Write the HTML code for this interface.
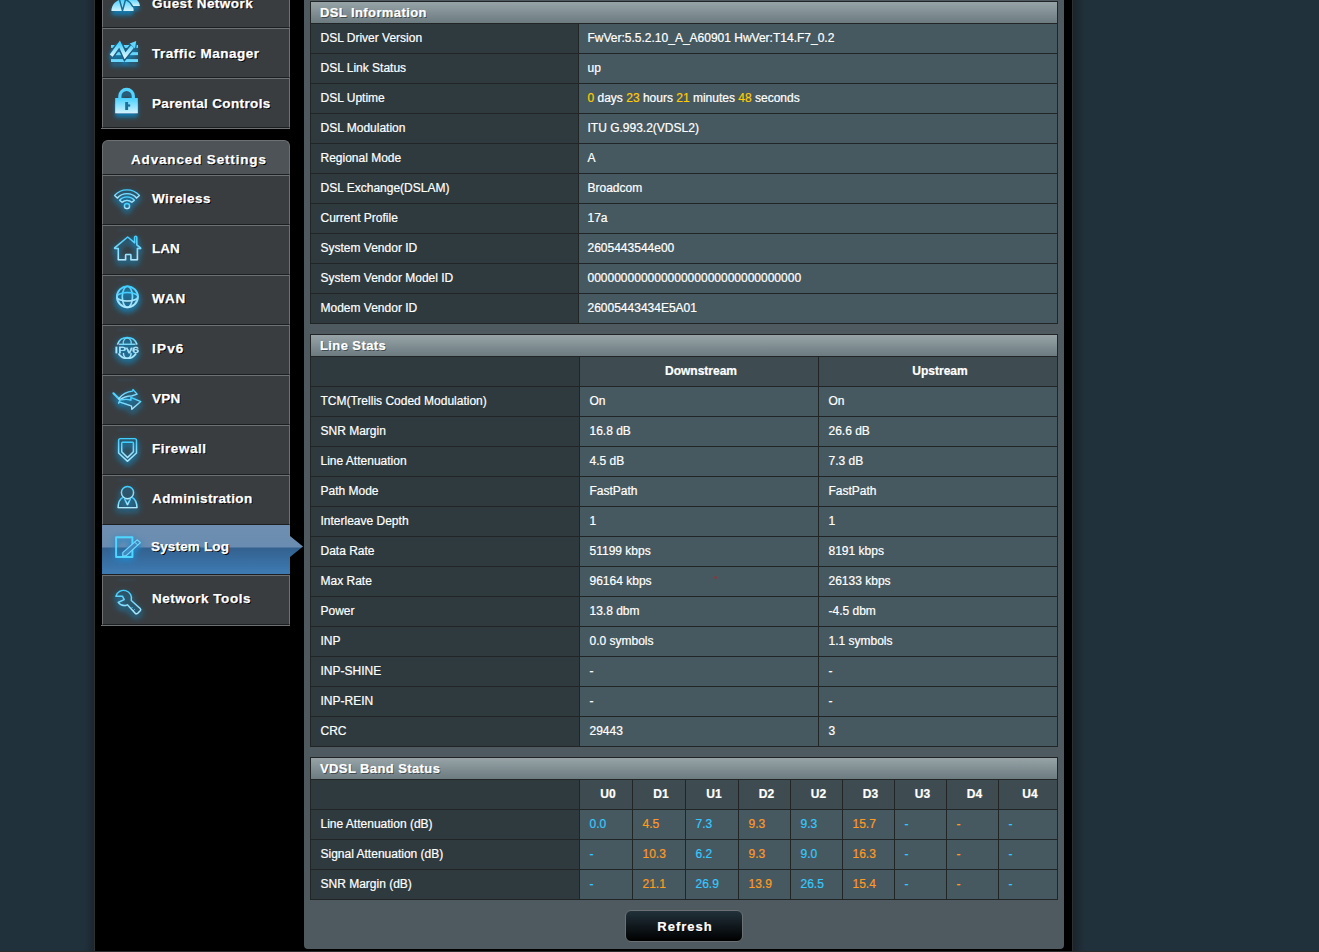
<!DOCTYPE html><html><head><meta charset="utf-8"><style>
html,body{margin:0;padding:0;}
body{width:1319px;height:952px;overflow:hidden;position:relative;background:#21313c;font-family:"Liberation Sans",sans-serif;color:#fff;font-size:12px;}
div{box-sizing:border-box;}
.t{position:absolute;white-space:nowrap;-webkit-text-stroke:0.2px currentColor;}
.mi{position:absolute;left:102px;width:188px;height:50px;background:#393d40;border-top:1px solid #6d7173;border-left:1px solid #6d7173;border-right:1px solid #6d7173;border-bottom:1px solid #1c1f20;}
.ml{position:absolute;left:152px;font-weight:bold;font-size:13.5px;line-height:14px;height:14px;white-space:nowrap;text-shadow:1px 1px 0 #000;-webkit-text-stroke:0.25px #fff;}
</style></head><body>

<div style="position:absolute;left:84px;top:0px;width:10px;height:952px;background:linear-gradient(90deg,#21313c,#1b262e)"></div>
<div style="position:absolute;left:94px;top:0px;width:1px;height:951px;background:#2e3132"></div>
<div style="position:absolute;left:95px;top:0px;width:977px;height:951px;background:#000"></div>
<div style="position:absolute;left:1072px;top:0px;width:1px;height:951px;background:#2e3132"></div>
<div style="position:absolute;left:1073px;top:0px;width:12px;height:952px;background:linear-gradient(90deg,#1a242b,#21313c)"></div>
<div style="position:absolute;left:0px;top:951px;width:1319px;height:1px;background:#2a2d2d"></div>
<div style="position:absolute;left:304px;top:-10px;width:760px;height:959px;background:#4e5a5f;border-radius:0 0 4px 4px"></div>
<div style="position:absolute;left:310px;top:1px;width:748px;height:323px;background:#212526"></div>
<div style="position:absolute;left:311px;top:2px;width:746px;height:21px;background:linear-gradient(#97a3a7,#6c7b80)"></div>
<div class="t" style="left:320px;top:2px;height:21px;line-height:21px;text-align:left;font-weight:bold;font-size:13px;letter-spacing:0.4px;text-shadow:1px 1px 0 rgba(0,0,0,0.45)">DSL Information</div>
<div style="position:absolute;left:311px;top:24px;width:267px;height:29px;background:#2e3a3e"></div>
<div class="t" style="left:320.5px;top:24px;height:29px;line-height:29px;text-align:left;">DSL Driver Version</div>
<div style="position:absolute;left:579px;top:24px;width:478px;height:29px;background:#475960"></div>
<div class="t" style="left:587.5px;top:24px;height:29px;line-height:29px;text-align:left;">FwVer:5.5.2.10_A_A60901 HwVer:T14.F7_0.2</div>
<div style="position:absolute;left:311px;top:54px;width:267px;height:29px;background:#2e3a3e"></div>
<div class="t" style="left:320.5px;top:54px;height:29px;line-height:29px;text-align:left;">DSL Link Status</div>
<div style="position:absolute;left:579px;top:54px;width:478px;height:29px;background:#475960"></div>
<div class="t" style="left:587.5px;top:54px;height:29px;line-height:29px;text-align:left;">up</div>
<div style="position:absolute;left:311px;top:84px;width:267px;height:29px;background:#2e3a3e"></div>
<div class="t" style="left:320.5px;top:84px;height:29px;line-height:29px;text-align:left;">DSL Uptime</div>
<div style="position:absolute;left:579px;top:84px;width:478px;height:29px;background:#475960"></div>
<div class="t" style="left:587.5px;top:84px;height:29px;line-height:29px;text-align:left;"><span style="color:#ffcc00">0</span> days <span style="color:#ffcc00">23</span> hours <span style="color:#ffcc00">21</span> minutes <span style="color:#ffcc00">48</span> seconds</div>
<div style="position:absolute;left:311px;top:114px;width:267px;height:29px;background:#2e3a3e"></div>
<div class="t" style="left:320.5px;top:114px;height:29px;line-height:29px;text-align:left;">DSL Modulation</div>
<div style="position:absolute;left:579px;top:114px;width:478px;height:29px;background:#475960"></div>
<div class="t" style="left:587.5px;top:114px;height:29px;line-height:29px;text-align:left;">ITU G.993.2(VDSL2)</div>
<div style="position:absolute;left:311px;top:144px;width:267px;height:29px;background:#2e3a3e"></div>
<div class="t" style="left:320.5px;top:144px;height:29px;line-height:29px;text-align:left;">Regional Mode</div>
<div style="position:absolute;left:579px;top:144px;width:478px;height:29px;background:#475960"></div>
<div class="t" style="left:587.5px;top:144px;height:29px;line-height:29px;text-align:left;">A</div>
<div style="position:absolute;left:311px;top:174px;width:267px;height:29px;background:#2e3a3e"></div>
<div class="t" style="left:320.5px;top:174px;height:29px;line-height:29px;text-align:left;">DSL Exchange(DSLAM)</div>
<div style="position:absolute;left:579px;top:174px;width:478px;height:29px;background:#475960"></div>
<div class="t" style="left:587.5px;top:174px;height:29px;line-height:29px;text-align:left;">Broadcom</div>
<div style="position:absolute;left:311px;top:204px;width:267px;height:29px;background:#2e3a3e"></div>
<div class="t" style="left:320.5px;top:204px;height:29px;line-height:29px;text-align:left;">Current Profile</div>
<div style="position:absolute;left:579px;top:204px;width:478px;height:29px;background:#475960"></div>
<div class="t" style="left:587.5px;top:204px;height:29px;line-height:29px;text-align:left;">17a</div>
<div style="position:absolute;left:311px;top:234px;width:267px;height:29px;background:#2e3a3e"></div>
<div class="t" style="left:320.5px;top:234px;height:29px;line-height:29px;text-align:left;">System Vendor ID</div>
<div style="position:absolute;left:579px;top:234px;width:478px;height:29px;background:#475960"></div>
<div class="t" style="left:587.5px;top:234px;height:29px;line-height:29px;text-align:left;">2605443544e00</div>
<div style="position:absolute;left:311px;top:264px;width:267px;height:29px;background:#2e3a3e"></div>
<div class="t" style="left:320.5px;top:264px;height:29px;line-height:29px;text-align:left;">System Vendor Model ID</div>
<div style="position:absolute;left:579px;top:264px;width:478px;height:29px;background:#475960"></div>
<div class="t" style="left:587.5px;top:264px;height:29px;line-height:29px;text-align:left;">00000000000000000000000000000000</div>
<div style="position:absolute;left:311px;top:294px;width:267px;height:29px;background:#2e3a3e"></div>
<div class="t" style="left:320.5px;top:294px;height:29px;line-height:29px;text-align:left;">Modem Vendor ID</div>
<div style="position:absolute;left:579px;top:294px;width:478px;height:29px;background:#475960"></div>
<div class="t" style="left:587.5px;top:294px;height:29px;line-height:29px;text-align:left;">26005443434E5A01</div>
<div style="position:absolute;left:310px;top:334px;width:748px;height:413px;background:#212526"></div>
<div style="position:absolute;left:311px;top:335px;width:746px;height:21px;background:linear-gradient(#97a3a7,#6c7b80)"></div>
<div class="t" style="left:320px;top:335px;height:21px;line-height:21px;text-align:left;font-weight:bold;font-size:13px;letter-spacing:0.4px;text-shadow:1px 1px 0 rgba(0,0,0,0.45)">Line Stats</div>
<div style="position:absolute;left:311px;top:357px;width:268px;height:29px;background:#2e3a3e"></div>
<div style="position:absolute;left:580px;top:357px;width:238px;height:29px;background:#3e4c51"></div>
<div class="t" style="left:582px;top:357px;height:29px;line-height:29px;width:238px;text-align:center;font-weight:bold">Downstream</div>
<div style="position:absolute;left:819px;top:357px;width:238px;height:29px;background:#3e4c51"></div>
<div class="t" style="left:821px;top:357px;height:29px;line-height:29px;width:238px;text-align:center;font-weight:bold">Upstream</div>
<div style="position:absolute;left:311px;top:387px;width:268px;height:29px;background:#2e3a3e"></div>
<div class="t" style="left:320.5px;top:387px;height:29px;line-height:29px;text-align:left;">TCM(Trellis Coded Modulation)</div>
<div style="position:absolute;left:580px;top:387px;width:238px;height:29px;background:#475960"></div>
<div class="t" style="left:589.5px;top:387px;height:29px;line-height:29px;text-align:left;">On</div>
<div style="position:absolute;left:819px;top:387px;width:238px;height:29px;background:#475960"></div>
<div class="t" style="left:828.5px;top:387px;height:29px;line-height:29px;text-align:left;">On</div>
<div style="position:absolute;left:311px;top:417px;width:268px;height:29px;background:#2e3a3e"></div>
<div class="t" style="left:320.5px;top:417px;height:29px;line-height:29px;text-align:left;">SNR Margin</div>
<div style="position:absolute;left:580px;top:417px;width:238px;height:29px;background:#475960"></div>
<div class="t" style="left:589.5px;top:417px;height:29px;line-height:29px;text-align:left;">16.8 dB</div>
<div style="position:absolute;left:819px;top:417px;width:238px;height:29px;background:#475960"></div>
<div class="t" style="left:828.5px;top:417px;height:29px;line-height:29px;text-align:left;">26.6 dB</div>
<div style="position:absolute;left:311px;top:447px;width:268px;height:29px;background:#2e3a3e"></div>
<div class="t" style="left:320.5px;top:447px;height:29px;line-height:29px;text-align:left;">Line Attenuation</div>
<div style="position:absolute;left:580px;top:447px;width:238px;height:29px;background:#475960"></div>
<div class="t" style="left:589.5px;top:447px;height:29px;line-height:29px;text-align:left;">4.5 dB</div>
<div style="position:absolute;left:819px;top:447px;width:238px;height:29px;background:#475960"></div>
<div class="t" style="left:828.5px;top:447px;height:29px;line-height:29px;text-align:left;">7.3 dB</div>
<div style="position:absolute;left:311px;top:477px;width:268px;height:29px;background:#2e3a3e"></div>
<div class="t" style="left:320.5px;top:477px;height:29px;line-height:29px;text-align:left;">Path Mode</div>
<div style="position:absolute;left:580px;top:477px;width:238px;height:29px;background:#475960"></div>
<div class="t" style="left:589.5px;top:477px;height:29px;line-height:29px;text-align:left;">FastPath</div>
<div style="position:absolute;left:819px;top:477px;width:238px;height:29px;background:#475960"></div>
<div class="t" style="left:828.5px;top:477px;height:29px;line-height:29px;text-align:left;">FastPath</div>
<div style="position:absolute;left:311px;top:507px;width:268px;height:29px;background:#2e3a3e"></div>
<div class="t" style="left:320.5px;top:507px;height:29px;line-height:29px;text-align:left;">Interleave Depth</div>
<div style="position:absolute;left:580px;top:507px;width:238px;height:29px;background:#475960"></div>
<div class="t" style="left:589.5px;top:507px;height:29px;line-height:29px;text-align:left;">1</div>
<div style="position:absolute;left:819px;top:507px;width:238px;height:29px;background:#475960"></div>
<div class="t" style="left:828.5px;top:507px;height:29px;line-height:29px;text-align:left;">1</div>
<div style="position:absolute;left:311px;top:537px;width:268px;height:29px;background:#2e3a3e"></div>
<div class="t" style="left:320.5px;top:537px;height:29px;line-height:29px;text-align:left;">Data Rate</div>
<div style="position:absolute;left:580px;top:537px;width:238px;height:29px;background:#475960"></div>
<div class="t" style="left:589.5px;top:537px;height:29px;line-height:29px;text-align:left;">51199 kbps</div>
<div style="position:absolute;left:819px;top:537px;width:238px;height:29px;background:#475960"></div>
<div class="t" style="left:828.5px;top:537px;height:29px;line-height:29px;text-align:left;">8191 kbps</div>
<div style="position:absolute;left:311px;top:567px;width:268px;height:29px;background:#2e3a3e"></div>
<div class="t" style="left:320.5px;top:567px;height:29px;line-height:29px;text-align:left;">Max Rate</div>
<div style="position:absolute;left:580px;top:567px;width:238px;height:29px;background:#475960"></div>
<div class="t" style="left:589.5px;top:567px;height:29px;line-height:29px;text-align:left;">96164 kbps</div>
<div style="position:absolute;left:819px;top:567px;width:238px;height:29px;background:#475960"></div>
<div class="t" style="left:828.5px;top:567px;height:29px;line-height:29px;text-align:left;">26133 kbps</div>
<div style="position:absolute;left:311px;top:597px;width:268px;height:29px;background:#2e3a3e"></div>
<div class="t" style="left:320.5px;top:597px;height:29px;line-height:29px;text-align:left;">Power</div>
<div style="position:absolute;left:580px;top:597px;width:238px;height:29px;background:#475960"></div>
<div class="t" style="left:589.5px;top:597px;height:29px;line-height:29px;text-align:left;">13.8 dbm</div>
<div style="position:absolute;left:819px;top:597px;width:238px;height:29px;background:#475960"></div>
<div class="t" style="left:828.5px;top:597px;height:29px;line-height:29px;text-align:left;">-4.5 dbm</div>
<div style="position:absolute;left:311px;top:627px;width:268px;height:29px;background:#2e3a3e"></div>
<div class="t" style="left:320.5px;top:627px;height:29px;line-height:29px;text-align:left;">INP</div>
<div style="position:absolute;left:580px;top:627px;width:238px;height:29px;background:#475960"></div>
<div class="t" style="left:589.5px;top:627px;height:29px;line-height:29px;text-align:left;">0.0 symbols</div>
<div style="position:absolute;left:819px;top:627px;width:238px;height:29px;background:#475960"></div>
<div class="t" style="left:828.5px;top:627px;height:29px;line-height:29px;text-align:left;">1.1 symbols</div>
<div style="position:absolute;left:311px;top:657px;width:268px;height:29px;background:#2e3a3e"></div>
<div class="t" style="left:320.5px;top:657px;height:29px;line-height:29px;text-align:left;">INP-SHINE</div>
<div style="position:absolute;left:580px;top:657px;width:238px;height:29px;background:#475960"></div>
<div class="t" style="left:589.5px;top:657px;height:29px;line-height:29px;text-align:left;">-</div>
<div style="position:absolute;left:819px;top:657px;width:238px;height:29px;background:#475960"></div>
<div class="t" style="left:828.5px;top:657px;height:29px;line-height:29px;text-align:left;">-</div>
<div style="position:absolute;left:311px;top:687px;width:268px;height:29px;background:#2e3a3e"></div>
<div class="t" style="left:320.5px;top:687px;height:29px;line-height:29px;text-align:left;">INP-REIN</div>
<div style="position:absolute;left:580px;top:687px;width:238px;height:29px;background:#475960"></div>
<div class="t" style="left:589.5px;top:687px;height:29px;line-height:29px;text-align:left;">-</div>
<div style="position:absolute;left:819px;top:687px;width:238px;height:29px;background:#475960"></div>
<div class="t" style="left:828.5px;top:687px;height:29px;line-height:29px;text-align:left;">-</div>
<div style="position:absolute;left:311px;top:717px;width:268px;height:29px;background:#2e3a3e"></div>
<div class="t" style="left:320.5px;top:717px;height:29px;line-height:29px;text-align:left;">CRC</div>
<div style="position:absolute;left:580px;top:717px;width:238px;height:29px;background:#475960"></div>
<div class="t" style="left:589.5px;top:717px;height:29px;line-height:29px;text-align:left;">29443</div>
<div style="position:absolute;left:819px;top:717px;width:238px;height:29px;background:#475960"></div>
<div class="t" style="left:828.5px;top:717px;height:29px;line-height:29px;text-align:left;">3</div>
<div style="position:absolute;left:310px;top:757px;width:748px;height:143px;background:#212526"></div>
<div style="position:absolute;left:311px;top:758px;width:746px;height:21px;background:linear-gradient(#97a3a7,#6c7b80)"></div>
<div class="t" style="left:320px;top:758px;height:21px;line-height:21px;text-align:left;font-weight:bold;font-size:13px;letter-spacing:0.4px;text-shadow:1px 1px 0 rgba(0,0,0,0.45)">VDSL Band Status</div>
<div style="position:absolute;left:311px;top:780px;width:268px;height:29px;background:#2e3a3e"></div>
<div style="position:absolute;left:580px;top:780px;width:52px;height:29px;background:#3e4c51"></div>
<div class="t" style="left:582px;top:780px;height:29px;line-height:29px;width:52px;text-align:center;font-weight:bold">U0</div>
<div style="position:absolute;left:633px;top:780px;width:52px;height:29px;background:#3e4c51"></div>
<div class="t" style="left:635px;top:780px;height:29px;line-height:29px;width:52px;text-align:center;font-weight:bold">D1</div>
<div style="position:absolute;left:686px;top:780px;width:52px;height:29px;background:#3e4c51"></div>
<div class="t" style="left:688px;top:780px;height:29px;line-height:29px;width:52px;text-align:center;font-weight:bold">U1</div>
<div style="position:absolute;left:739px;top:780px;width:51px;height:29px;background:#3e4c51"></div>
<div class="t" style="left:741px;top:780px;height:29px;line-height:29px;width:51px;text-align:center;font-weight:bold">D2</div>
<div style="position:absolute;left:791px;top:780px;width:51px;height:29px;background:#3e4c51"></div>
<div class="t" style="left:793px;top:780px;height:29px;line-height:29px;width:51px;text-align:center;font-weight:bold">U2</div>
<div style="position:absolute;left:843px;top:780px;width:51px;height:29px;background:#3e4c51"></div>
<div class="t" style="left:845px;top:780px;height:29px;line-height:29px;width:51px;text-align:center;font-weight:bold">D3</div>
<div style="position:absolute;left:895px;top:780px;width:51px;height:29px;background:#3e4c51"></div>
<div class="t" style="left:897px;top:780px;height:29px;line-height:29px;width:51px;text-align:center;font-weight:bold">U3</div>
<div style="position:absolute;left:947px;top:780px;width:51px;height:29px;background:#3e4c51"></div>
<div class="t" style="left:949px;top:780px;height:29px;line-height:29px;width:51px;text-align:center;font-weight:bold">D4</div>
<div style="position:absolute;left:999px;top:780px;width:58px;height:29px;background:#3e4c51"></div>
<div class="t" style="left:1001px;top:780px;height:29px;line-height:29px;width:58px;text-align:center;font-weight:bold">U4</div>
<div style="position:absolute;left:311px;top:810px;width:268px;height:29px;background:#2e3a3e"></div>
<div class="t" style="left:320.5px;top:810px;height:29px;line-height:29px;text-align:left;">Line Attenuation (dB)</div>
<div style="position:absolute;left:580px;top:810px;width:52px;height:29px;background:#475960"></div>
<div class="t" style="left:589.5px;top:810px;height:29px;line-height:29px;text-align:left;color:#35c8ff">0.0</div>
<div style="position:absolute;left:633px;top:810px;width:52px;height:29px;background:#475960"></div>
<div class="t" style="left:642.5px;top:810px;height:29px;line-height:29px;text-align:left;color:#ff9a22">4.5</div>
<div style="position:absolute;left:686px;top:810px;width:52px;height:29px;background:#475960"></div>
<div class="t" style="left:695.5px;top:810px;height:29px;line-height:29px;text-align:left;color:#35c8ff">7.3</div>
<div style="position:absolute;left:739px;top:810px;width:51px;height:29px;background:#475960"></div>
<div class="t" style="left:748.5px;top:810px;height:29px;line-height:29px;text-align:left;color:#ff9a22">9.3</div>
<div style="position:absolute;left:791px;top:810px;width:51px;height:29px;background:#475960"></div>
<div class="t" style="left:800.5px;top:810px;height:29px;line-height:29px;text-align:left;color:#35c8ff">9.3</div>
<div style="position:absolute;left:843px;top:810px;width:51px;height:29px;background:#475960"></div>
<div class="t" style="left:852.5px;top:810px;height:29px;line-height:29px;text-align:left;color:#ff9a22">15.7</div>
<div style="position:absolute;left:895px;top:810px;width:51px;height:29px;background:#475960"></div>
<div class="t" style="left:904.5px;top:810px;height:29px;line-height:29px;text-align:left;color:#35c8ff">-</div>
<div style="position:absolute;left:947px;top:810px;width:51px;height:29px;background:#475960"></div>
<div class="t" style="left:956.5px;top:810px;height:29px;line-height:29px;text-align:left;color:#ff9a22">-</div>
<div style="position:absolute;left:999px;top:810px;width:58px;height:29px;background:#475960"></div>
<div class="t" style="left:1008.5px;top:810px;height:29px;line-height:29px;text-align:left;color:#35c8ff">-</div>
<div style="position:absolute;left:311px;top:840px;width:268px;height:29px;background:#2e3a3e"></div>
<div class="t" style="left:320.5px;top:840px;height:29px;line-height:29px;text-align:left;">Signal Attenuation (dB)</div>
<div style="position:absolute;left:580px;top:840px;width:52px;height:29px;background:#475960"></div>
<div class="t" style="left:589.5px;top:840px;height:29px;line-height:29px;text-align:left;color:#35c8ff">-</div>
<div style="position:absolute;left:633px;top:840px;width:52px;height:29px;background:#475960"></div>
<div class="t" style="left:642.5px;top:840px;height:29px;line-height:29px;text-align:left;color:#ff9a22">10.3</div>
<div style="position:absolute;left:686px;top:840px;width:52px;height:29px;background:#475960"></div>
<div class="t" style="left:695.5px;top:840px;height:29px;line-height:29px;text-align:left;color:#35c8ff">6.2</div>
<div style="position:absolute;left:739px;top:840px;width:51px;height:29px;background:#475960"></div>
<div class="t" style="left:748.5px;top:840px;height:29px;line-height:29px;text-align:left;color:#ff9a22">9.3</div>
<div style="position:absolute;left:791px;top:840px;width:51px;height:29px;background:#475960"></div>
<div class="t" style="left:800.5px;top:840px;height:29px;line-height:29px;text-align:left;color:#35c8ff">9.0</div>
<div style="position:absolute;left:843px;top:840px;width:51px;height:29px;background:#475960"></div>
<div class="t" style="left:852.5px;top:840px;height:29px;line-height:29px;text-align:left;color:#ff9a22">16.3</div>
<div style="position:absolute;left:895px;top:840px;width:51px;height:29px;background:#475960"></div>
<div class="t" style="left:904.5px;top:840px;height:29px;line-height:29px;text-align:left;color:#35c8ff">-</div>
<div style="position:absolute;left:947px;top:840px;width:51px;height:29px;background:#475960"></div>
<div class="t" style="left:956.5px;top:840px;height:29px;line-height:29px;text-align:left;color:#ff9a22">-</div>
<div style="position:absolute;left:999px;top:840px;width:58px;height:29px;background:#475960"></div>
<div class="t" style="left:1008.5px;top:840px;height:29px;line-height:29px;text-align:left;color:#35c8ff">-</div>
<div style="position:absolute;left:311px;top:870px;width:268px;height:29px;background:#2e3a3e"></div>
<div class="t" style="left:320.5px;top:870px;height:29px;line-height:29px;text-align:left;">SNR Margin (dB)</div>
<div style="position:absolute;left:580px;top:870px;width:52px;height:29px;background:#475960"></div>
<div class="t" style="left:589.5px;top:870px;height:29px;line-height:29px;text-align:left;color:#35c8ff">-</div>
<div style="position:absolute;left:633px;top:870px;width:52px;height:29px;background:#475960"></div>
<div class="t" style="left:642.5px;top:870px;height:29px;line-height:29px;text-align:left;color:#ff9a22">21.1</div>
<div style="position:absolute;left:686px;top:870px;width:52px;height:29px;background:#475960"></div>
<div class="t" style="left:695.5px;top:870px;height:29px;line-height:29px;text-align:left;color:#35c8ff">26.9</div>
<div style="position:absolute;left:739px;top:870px;width:51px;height:29px;background:#475960"></div>
<div class="t" style="left:748.5px;top:870px;height:29px;line-height:29px;text-align:left;color:#ff9a22">13.9</div>
<div style="position:absolute;left:791px;top:870px;width:51px;height:29px;background:#475960"></div>
<div class="t" style="left:800.5px;top:870px;height:29px;line-height:29px;text-align:left;color:#35c8ff">26.5</div>
<div style="position:absolute;left:843px;top:870px;width:51px;height:29px;background:#475960"></div>
<div class="t" style="left:852.5px;top:870px;height:29px;line-height:29px;text-align:left;color:#ff9a22">15.4</div>
<div style="position:absolute;left:895px;top:870px;width:51px;height:29px;background:#475960"></div>
<div class="t" style="left:904.5px;top:870px;height:29px;line-height:29px;text-align:left;color:#35c8ff">-</div>
<div style="position:absolute;left:947px;top:870px;width:51px;height:29px;background:#475960"></div>
<div class="t" style="left:956.5px;top:870px;height:29px;line-height:29px;text-align:left;color:#ff9a22">-</div>
<div style="position:absolute;left:999px;top:870px;width:58px;height:29px;background:#475960"></div>
<div class="t" style="left:1008.5px;top:870px;height:29px;line-height:29px;text-align:left;color:#35c8ff">-</div>
<div style="position:absolute;left:715px;top:577px;width:1px;height:1px;background:#ff0000;box-shadow:0 0 1px 0.5px rgba(255,0,0,0.6)"></div>
<div style="position:absolute;left:625px;top:910px;width:118px;height:32px;border:1px solid #6a7073;border-radius:6px;background:linear-gradient(#21313a,#000);"></div>
<div class="t" style="left:626px;top:911px;height:32px;line-height:32px;width:118px;text-align:center;font-weight:bold;font-size:13px;letter-spacing:1px;text-shadow:1px 1px 0 #000">Refresh</div>
<div class="mi" style="top:-22px"></div>
<div class="ml" style="top:-3px;letter-spacing:0.45px">Guest Network</div>
<div class="mi" style="top:28px"></div>
<div class="ml" style="top:47px;letter-spacing:0.52px">Traffic Manager</div>
<div class="mi" style="top:78px"></div>
<div class="ml" style="top:97px;letter-spacing:0.36px">Parental Controls</div>
<div style="position:absolute;left:101px;top:128px;width:189px;height:1px;background:#6d7173"></div>
<div style="position:absolute;left:102px;top:140px;width:188px;height:35px;background:#4d5356;border:1px solid #6d7173;border-bottom:1px solid #1c1f20;border-radius:6px 6px 0 0"></div>
<div class="ml" style="left:131px;top:153px;letter-spacing:0.84px">Advanced Settings</div>
<div class="mi" style="top:175px"></div>
<div style="position:absolute;left:117px;top:179px;width:19px;height:2px;background:rgba(45,120,160,0.14);filter:blur(1px)"></div>
<div class="ml" style="top:192px;letter-spacing:0.43px">Wireless</div>
<div class="mi" style="top:225px"></div>
<div style="position:absolute;left:117px;top:229px;width:19px;height:2px;background:rgba(45,120,160,0.14);filter:blur(1px)"></div>
<div class="ml" style="top:242px;letter-spacing:0.0px">LAN</div>
<div class="mi" style="top:275px"></div>
<div style="position:absolute;left:117px;top:279px;width:19px;height:2px;background:rgba(45,120,160,0.14);filter:blur(1px)"></div>
<div class="ml" style="top:292px;letter-spacing:0.9px">WAN</div>
<div class="mi" style="top:325px"></div>
<div style="position:absolute;left:117px;top:329px;width:19px;height:2px;background:rgba(45,120,160,0.14);filter:blur(1px)"></div>
<div class="ml" style="top:342px;letter-spacing:1.2px">IPv6</div>
<div class="mi" style="top:375px"></div>
<div style="position:absolute;left:117px;top:379px;width:19px;height:2px;background:rgba(45,120,160,0.14);filter:blur(1px)"></div>
<div class="ml" style="top:392px;letter-spacing:0.2px">VPN</div>
<div class="mi" style="top:425px"></div>
<div style="position:absolute;left:117px;top:429px;width:19px;height:2px;background:rgba(45,120,160,0.14);filter:blur(1px)"></div>
<div class="ml" style="top:442px;letter-spacing:0.53px">Firewall</div>
<div class="mi" style="top:475px"></div>
<div style="position:absolute;left:117px;top:479px;width:19px;height:2px;background:rgba(45,120,160,0.14);filter:blur(1px)"></div>
<div class="ml" style="top:492px;letter-spacing:0.38px">Administration</div>
<div style="position:absolute;left:102px;top:525px;width:188px;height:49px;background:linear-gradient(#6e8fb1 0,#6a8cb0 22px,#33618f 23px,#3e7bb3 49px)"></div>
<div style="position:absolute;left:290px;top:525px;width:14px;height:49px;background:linear-gradient(#6e8fb1 0,#6a8cb0 22px,#33618f 23px,#3e7bb3 49px);clip-path:polygon(0 11px,13px 21.5px,0 32px)"></div>
<div class="ml" style="left:151px;top:540px;letter-spacing:0.16px">System Log</div>
<div style="position:absolute;left:102px;top:574px;width:188px;height:1px;background:#1c1f20"></div>
<div class="mi" style="top:575px"></div>
<div style="position:absolute;left:117px;top:579px;width:19px;height:2px;background:rgba(45,120,160,0.14);filter:blur(1px)"></div>
<div class="ml" style="top:592px;letter-spacing:0.54px">Network Tools</div>
<div style="position:absolute;left:101px;top:625px;width:189px;height:1px;background:#6d7173"></div>

<svg style="position:absolute;left:0;top:0;width:1319px;height:952px;pointer-events:none" width="1319" height="952" viewBox="0 0 1319 952">
<defs>
<linearGradient id="cf" x1="0" y1="0" x2="0" y2="1"><stop offset="0" stop-color="#48d0ff"/><stop offset="1" stop-color="#d2f3ff"/></linearGradient>
<linearGradient id="cs" x1="0" y1="0" x2="0" y2="1"><stop offset="0" stop-color="#3fcdff"/><stop offset="1" stop-color="#aeeaff"/></linearGradient>
<filter id="gf" x="-60%" y="-60%" width="220%" height="240%">
  <feGaussianBlur in="SourceAlpha" stdDeviation="2.2" result="b"/>
  <feOffset in="b" dy="3.5" result="o"/>
  <feFlood flood-color="#137bb0" flood-opacity="1"/>
  <feComposite in2="o" operator="in" result="s"/>
  <feMerge><feMergeNode in="s"/><feMergeNode in="SourceGraphic"/></feMerge>
</filter>
<filter id="go" x="-60%" y="-60%" width="220%" height="240%">
  <feGaussianBlur in="SourceAlpha" stdDeviation="3" result="b"/>
  <feOffset in="b" dy="2.5" result="o"/>
  <feComponentTransfer in="o" result="o2"><feFuncA type="linear" slope="2.6"/></feComponentTransfer>
  <feFlood flood-color="#1a78a6" flood-opacity="0.85"/>
  <feComposite in2="o2" operator="in" result="s"/>
  <feMerge><feMergeNode in="s"/><feMergeNode in="SourceGraphic"/></feMerge>
</filter>
<filter id="gs" x="-60%" y="-60%" width="220%" height="240%">
  <feGaussianBlur in="SourceAlpha" stdDeviation="3" result="b"/>
  <feOffset in="b" dy="2" result="o"/>
  <feComponentTransfer in="o" result="o2"><feFuncA type="linear" slope="2"/></feComponentTransfer>
  <feFlood flood-color="#1f86c8" flood-opacity="0.8"/>
  <feComposite in2="o2" operator="in" result="s"/>
  <feMerge><feMergeNode in="s"/><feMergeNode in="SourceGraphic"/></feMerge>
</filter>
</defs>

<!-- Guest Network (partial) -->
<g filter="url(#gf)">
  <path d="M125.5,6 A7.2,7.6 0 0 1 139.9,6 Z" fill="url(#cf)"/>
  <path d="M111.5,11 A11,11.5 0 0 1 133.5,11 Z" fill="url(#cf)"/>
  <path d="M119.3,-1 L122.5,10.6 L125.7,-1" fill="none" stroke="#1a6d94" stroke-width="1.5"/>
  <path d="M125.8,-0.5 C129.5,1.5 131.6,4 133,7" fill="none" stroke="#1a6d94" stroke-width="1.4"/>
</g>

<!-- Traffic Manager -->
<clipPath id="barsclip"><rect x="108" y="43.5" width="33" height="20"/></clipPath>
<g filter="url(#gf)">
  <rect x="111" y="45" width="27" height="2.9" fill="#63d5fb"/>
  <rect x="111" y="52.2" width="27" height="2.9" fill="#63d5fb"/>
  <rect x="111" y="59.1" width="27" height="2.9" fill="#69d8fc"/>
  <g clip-path="url(#barsclip)">
  <path d="M111.2,55.6 L119.6,44 L125,55.8 L132.5,46.5" fill="none" stroke="#1c5f82" stroke-width="6.6" stroke-linejoin="miter"/>
  <path d="M136.3,40.8 L129,43.2 L135,49.2 Z" fill="#1c5f82" stroke="#1c5f82" stroke-width="2.2"/>
  </g>
  <path d="M111.2,55.6 L119.6,44 L125,55.8 L132.5,46.5" fill="none" stroke="url(#cf)" stroke-width="3.6" stroke-linejoin="miter" stroke-miterlimit="10"/>
  <path d="M136.2,41 L129.8,43.4 L135,48.6 Z" fill="#5fd6ff"/>
</g>

<!-- Parental Controls lock -->
<g filter="url(#gf)">
  <path d="M118.3,98.5 L118.3,96 A8.3,8.3 0 0 1 134.9,96 L134.9,98.5 L131.8,98.5 L131.8,96.3 A5.2,5.2 0 0 0 121.4,96.3 L121.4,98.5 Z" fill="#52d3ff"/>
  <rect x="115.2" y="98" width="22.6" height="15.2" fill="url(#cf)"/>
  <rect x="125.2" y="102" width="2.9" height="8" fill="#1b6f97"/>
  <rect x="128" y="104.4" width="2.2" height="2.2" fill="#1b6f97"/>
</g>

<!-- Wireless -->
<g filter="url(#go)" fill="none" stroke="url(#cs)" stroke-width="1.3" stroke-linejoin="round">
  <path d="M114.6,195.4 A16.6,16.6 0 0 1 139.4,195.4 L136.6,198 A12.8,12.8 0 0 0 117.4,198 Z"/>
  <path d="M119.6,200.2 A9.8,9.8 0 0 1 134.4,200.2 L131.8,202.2 A7.2,7.2 0 0 0 122.2,202.2 Z"/>
  <circle cx="127" cy="206.1" r="2.6"/>
</g>

<!-- LAN house -->
<g filter="url(#go)" fill="none" stroke="url(#cs)" stroke-width="1.5" stroke-linejoin="round">
  <path d="M118.3,259.8 L118.3,248.6 L115,248.6 Q114.2,248.2 114.9,247.6 L127.7,237 L134.6,242.8 L134.6,237 Q135.7,235.6 136.8,237 L136.8,244.8 L140.5,247.8 Q141,248.6 140.2,248.6 L137.4,248.6 L137.4,259.8 L130.9,259.8 L130.9,255.2 Q130.9,254.6 130.3,254.6 L126.2,254.6 Q125.6,254.6 125.6,255.2 L125.6,259.8 Z"/>
</g>

<!-- WAN globe -->
<g filter="url(#go)" fill="none" stroke="url(#cs)" stroke-width="1.5">
  <circle cx="127.4" cy="296.8" r="10.5" stroke-width="1.8"/>
  <ellipse cx="127.4" cy="296.8" rx="5.1" ry="10.5"/>
  <ellipse cx="127.4" cy="296.8" rx="10.6" ry="4.2"/>
</g>

<!-- IPv6 -->
<g filter="url(#go)">
  <path d="M117.5,344.5 A10.3,10.3 0 0 1 137,344.5" fill="none" stroke="url(#cs)" stroke-width="1.5"/>
  <path d="M118.5,353.5 A10.3,10.3 0 0 0 136,353.5" fill="none" stroke="#a6e8ff" stroke-width="1.5"/>
  <path d="M123.5,344 C122.5,341 124.5,338.5 127.2,338 C130,338.5 132,341 131,344" fill="none" stroke="#6cd9ff" stroke-width="1.2"/>
  <line x1="119" y1="344.3" x2="135.5" y2="344.3" stroke="#7fdfff" stroke-width="1.2"/>
  <path d="M123.5,353 C123,355.5 125,358 127.2,358.5 C129.5,358 131.5,355.5 131,353" fill="none" stroke="#a6e8ff" stroke-width="1.2"/>
  <text x="114.8" y="352.9" font-family="Liberation Sans" font-size="9.4" fill="#a6e8ff" stroke="#a6e8ff" stroke-width="0.35" textLength="24.2" lengthAdjust="spacingAndGlyphs">IPv6</text>
</g>

<!-- VPN -->
<g filter="url(#go)" fill="none" stroke="url(#cs)" stroke-width="1.3" stroke-linejoin="round" stroke-linecap="round">
  <path d="M113.4,393.3 L119.4,399.2" stroke-width="2.1" stroke="#4fd3ff"/>
  <path d="M119.9,399.7 C123,397.4 127,395.9 131.8,395.8 L137.1,394.1 L133,389.5 L132.5,391.1 C127,391.5 122.5,393.8 118.6,398.8"/>
  <path d="M118.6,403.2 L120,399.9 C124,399.3 128,399 131,400.1 L130.8,397.4 L140.8,401.6 L131.8,409.2 L131.5,406 C127.5,404.6 123,403.2 120.2,402.2"/>
</g>

<!-- Firewall shield -->
<g filter="url(#go)" fill="none" stroke="url(#cs)" stroke-width="1.4" stroke-linejoin="round">
  <path d="M120.5,438.6 L134.6,438.6 Q136.5,438.6 136.5,440.5 L136.5,453 L127.5,461.2 L118.6,453 L118.6,440.5 Q118.6,438.6 120.5,438.6 Z"/>
  <path d="M122.6,442.2 L132.6,442.2 Q133.4,442.2 133.4,443 L133.4,451.8 L127.5,457.6 L121.7,451.8 L121.7,443 Q121.7,442.2 122.6,442.2 Z"/>
</g>

<!-- Administration person -->
<g filter="url(#go)" fill="none" stroke="url(#cs)" stroke-width="1.4" stroke-linejoin="round">
  <circle cx="127.5" cy="492.6" r="6.1"/>
  <path d="M122.8,497.4 C119.8,499 118.2,503 118.1,507.6 L137,507.6 C136.8,503 135.2,499 132.2,497.4"/>
  <path d="M124.4,498.6 L127.5,504.6 L130.6,498.6"/>
</g>

<!-- System Log -->
<g filter="url(#gs)" fill="none" stroke-linejoin="round">
  <rect x="116.1" y="537.2" width="16.3" height="19.8" stroke="#4fd6ff" stroke-width="1.9"/>
  <path d="M122.8,556.2 L122.8,552.6 L137.2,539.8 L140.4,542.6 L126.2,555.6 Z" fill="#3f89bf" stroke="#74dcff" stroke-width="1.1"/>
  <line x1="134.6" y1="542.2" x2="137.8" y2="545" stroke="#74dcff" stroke-width="1"/>
</g>

<!-- Network Tools wrench -->
<g filter="url(#go)" fill="none" stroke="url(#cs)" stroke-width="1.4" stroke-linejoin="round">
  <path d="M115.9,596.3 A7.8,7.8 0 1 1 131.3,600.4 L140.2,608.4 Q141.3,609.6 140.2,610.8 L137.7,613.3 Q136.4,614.4 135.2,613.2 L127.4,604.8 A7.8,7.8 0 0 1 118.2,602.4 L124.2,599.6 L122.4,596.2 Z"/>
  <path d="M131.2,608.4 L132.4,607.2 M133.4,610.6 L134.6,609.4" stroke-width="1"/>
</g>
</svg>

</body></html>
